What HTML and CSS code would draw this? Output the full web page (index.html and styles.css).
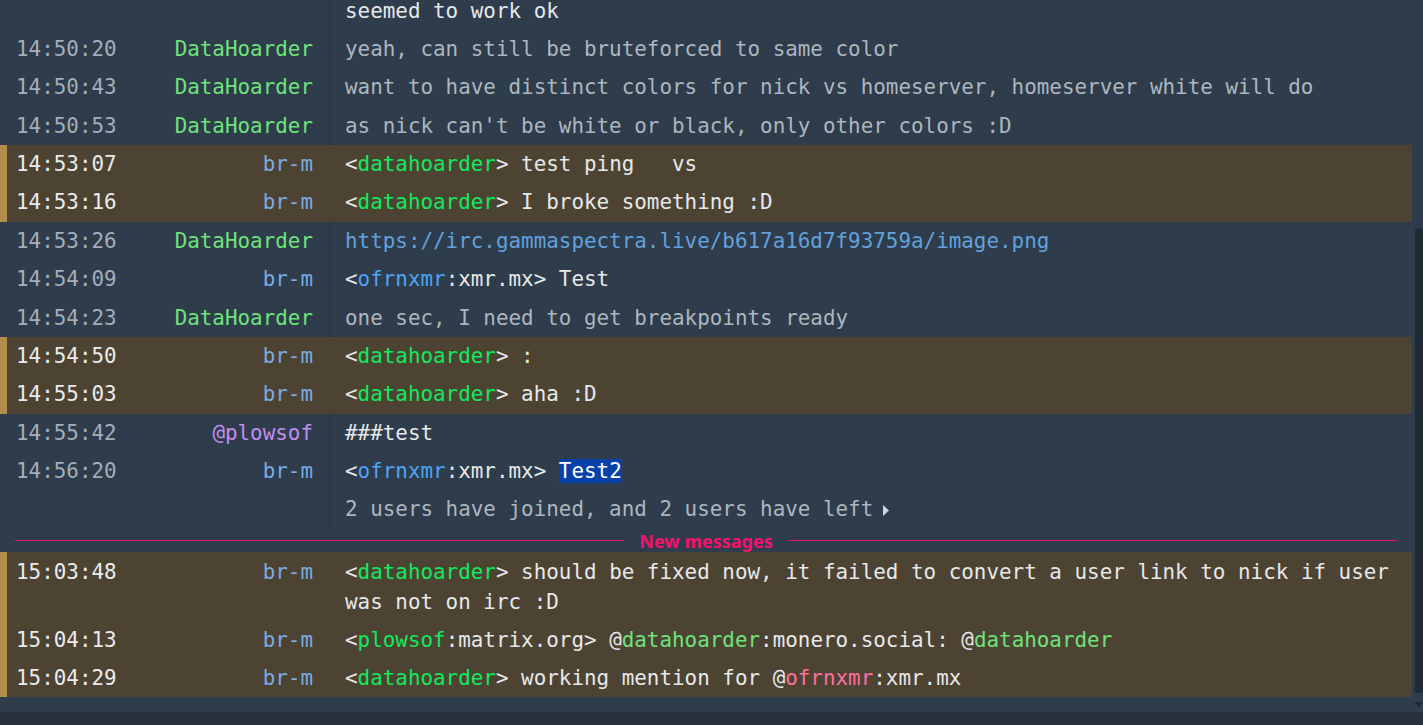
FILE: index.html
```html
<!DOCTYPE html>
<html>
<head>
<meta charset="utf-8">
<link rel="stylesheet" href="styles.css">
</head>
<body>
<div class="app">
  <div class="main">
    <div class="log">
      <div class="list">
        <div class="row"><div class="time"></div><div class="nick"></div><div class="msg">seemed to work ok</div></div>
        <div class="row"><div class="time">14:50:20</div><div class="nick c-dh">DataHoarder</div><div class="msg dim">yeah, can still be bruteforced to same color</div></div>
        <div class="row"><div class="time">14:50:43</div><div class="nick c-dh">DataHoarder</div><div class="msg dim">want to have distinct colors for nick vs homeserver, homeserver white will do</div></div>
        <div class="row"><div class="time">14:50:53</div><div class="nick c-dh">DataHoarder</div><div class="msg dim">as nick can't be white or black, only other colors :D</div></div>
        <div class="row hl"><div class="time">14:53:07</div><div class="nick c-br">br-m</div><div class="msg">&lt;<span class="c-green">datahoarder</span>&gt; test ping &nbsp;&nbsp;vs</div></div>
        <div class="row hl"><div class="time">14:53:16</div><div class="nick c-br">br-m</div><div class="msg">&lt;<span class="c-green">datahoarder</span>&gt; I broke something :D</div></div>
        <div class="row"><div class="time">14:53:26</div><div class="nick c-dh">DataHoarder</div><div class="msg"><span class="link">https://irc.gammaspectra.live/b617a16d7f93759a/image.png</span></div></div>
        <div class="row"><div class="time">14:54:09</div><div class="nick c-br">br-m</div><div class="msg">&lt;<span class="c-blue">ofrnxmr</span>:xmr.mx&gt; Test</div></div>
        <div class="row"><div class="time">14:54:23</div><div class="nick c-dh">DataHoarder</div><div class="msg dim">one sec, I need to get breakpoints ready</div></div>
        <div class="row hl"><div class="time">14:54:50</div><div class="nick c-br">br-m</div><div class="msg">&lt;<span class="c-green">datahoarder</span>&gt; :</div></div>
        <div class="row hl"><div class="time">14:55:03</div><div class="nick c-br">br-m</div><div class="msg">&lt;<span class="c-green">datahoarder</span>&gt; aha :D</div></div>
        <div class="row"><div class="time">14:55:42</div><div class="nick c-pl">@plowsof</div><div class="msg">###test</div></div>
        <div class="row"><div class="time">14:56:20</div><div class="nick c-br">br-m</div><div class="msg">&lt;<span class="c-blue">ofrnxmr</span>:xmr.mx&gt; <span class="sel">Test2</span></div></div>
        <div class="row"><div class="time"></div><div class="nick"></div><div class="msg dim">2 users have joined, and 2 users have left<svg class="caret" width="8" height="13" viewBox="0 0 8 13"><polygon points="1,1 7,6.5 1,12" fill="#d0d5da"/></svg></div></div>
        <div class="divider"><span class="divider-text">New messages</span></div>
        <div class="row hl"><div class="time">15:03:48</div><div class="nick c-br">br-m</div><div class="msg">&lt;<span class="c-green">datahoarder</span>&gt; should be fixed now, it failed to convert a user link to nick if user was not on irc :D</div></div>
        <div class="row hl"><div class="time">15:04:13</div><div class="nick c-br">br-m</div><div class="msg">&lt;<span class="c-green">plowsof</span>:matrix.org&gt; @<span class="c-dh">datahoarder</span>:monero.social: @<span class="c-dh">datahoarder</span></div></div>
        <div class="row hl"><div class="time">15:04:29</div><div class="nick c-br">br-m</div><div class="msg">&lt;<span class="c-green">datahoarder</span>&gt; working mention for @<span class="c-pink">ofrnxmr</span>:xmr.mx</div></div>
      </div>
    </div>
    <div class="scroll">
      <div class="thumb"></div>
      <div class="arrow"></div>
    </div>
  </div>
  <div class="inputbar"></div>
</div>
</body>
</html>
```

FILE: styles.css
```css
html, body {
  margin: 0;
  padding: 0;
}
body {
  background: #2e3c4b;
  font-family: "DejaVu Sans Mono", monospace;
  font-size: 20.9px;
  color: #e6e8ea;
  overflow: hidden;
}
.app {
  display: flex;
  flex-direction: column;
  height: 725px;
}
.main {
  flex: 1;
  display: flex;
  min-height: 0;
}
.log {
  flex: 1;
  overflow: hidden;
}
.list {
  margin-top: -8.6px;
}
.row {
  display: flex;
  padding-left: 16px;
  line-height: 30px;
}
.row.hl {
  background: #4d4333;
  border-left: 7px solid #b38f4f;
  padding-left: 9px;
}
.time {
  width: 104px;
  flex: none;
  padding: 4.2px 0;
  color: #a3aeb9;
  white-space: nowrap;
}
.row.hl .time {
  color: #ebebeb;
}
.nick {
  width: 209px;
  box-sizing: border-box;
  flex: none;
  padding: 4.2px 16px 4.2px 0;
  text-align: right;
  white-space: nowrap;
}
.msg {
  flex: 1;
  border-left: 1px solid #26323e;
  padding: 4.2px 16px 4.2px 15px;
  min-width: 0;
}
.row.hl .msg {
  border-left-color: transparent;
}
.dim {
  color: #adb6bf;
}
.c-dh { color: #6ee37b; }
.c-br { color: #79abe6; }
.c-pl { color: #c18ef0; }
.c-green { color: #12e85e; }
.c-blue { color: #4ca5f2; }
.c-pink { color: #ff6ea0; }
.link { color: #62a1dc; }
.sel {
  background: #0842a8;
  color: #ffffff;
}
.caret {
  margin-left: 9px;
  vertical-align: -1px;
}
.divider {
  display: flex;
  align-items: center;
  height: 23.7px;
  margin: 0 15px;
}
.divider::before,
.divider::after {
  content: "";
  flex: 1;
  height: 1px;
  background: #e8136c;
}
.divider-text {
  padding: 0 15px;
  font-family: "Noto Sans", sans-serif;
  font-weight: 700;
  font-size: 18px;
  line-height: 1;
  color: #f5116d;
}
.scroll {
  width: 11px;
  flex: none;
  padding-top: 228px;
  box-sizing: border-box;
}
.thumb {
  width: 8px;
  margin-left: 3px;
  height: 465px;
  background: #1f2a34;
  border-radius: 4px 4px 3px 3px;
}
.arrow {
  width: 0;
  height: 0;
  margin: 9px 0 0 3px;
  border-left: 4px solid transparent;
  border-right: 4px solid transparent;
  border-top: 5px solid #1f2a34;
}
.inputbar {
  height: 13px;
  flex: none;
  background: #26313c;
}
```
